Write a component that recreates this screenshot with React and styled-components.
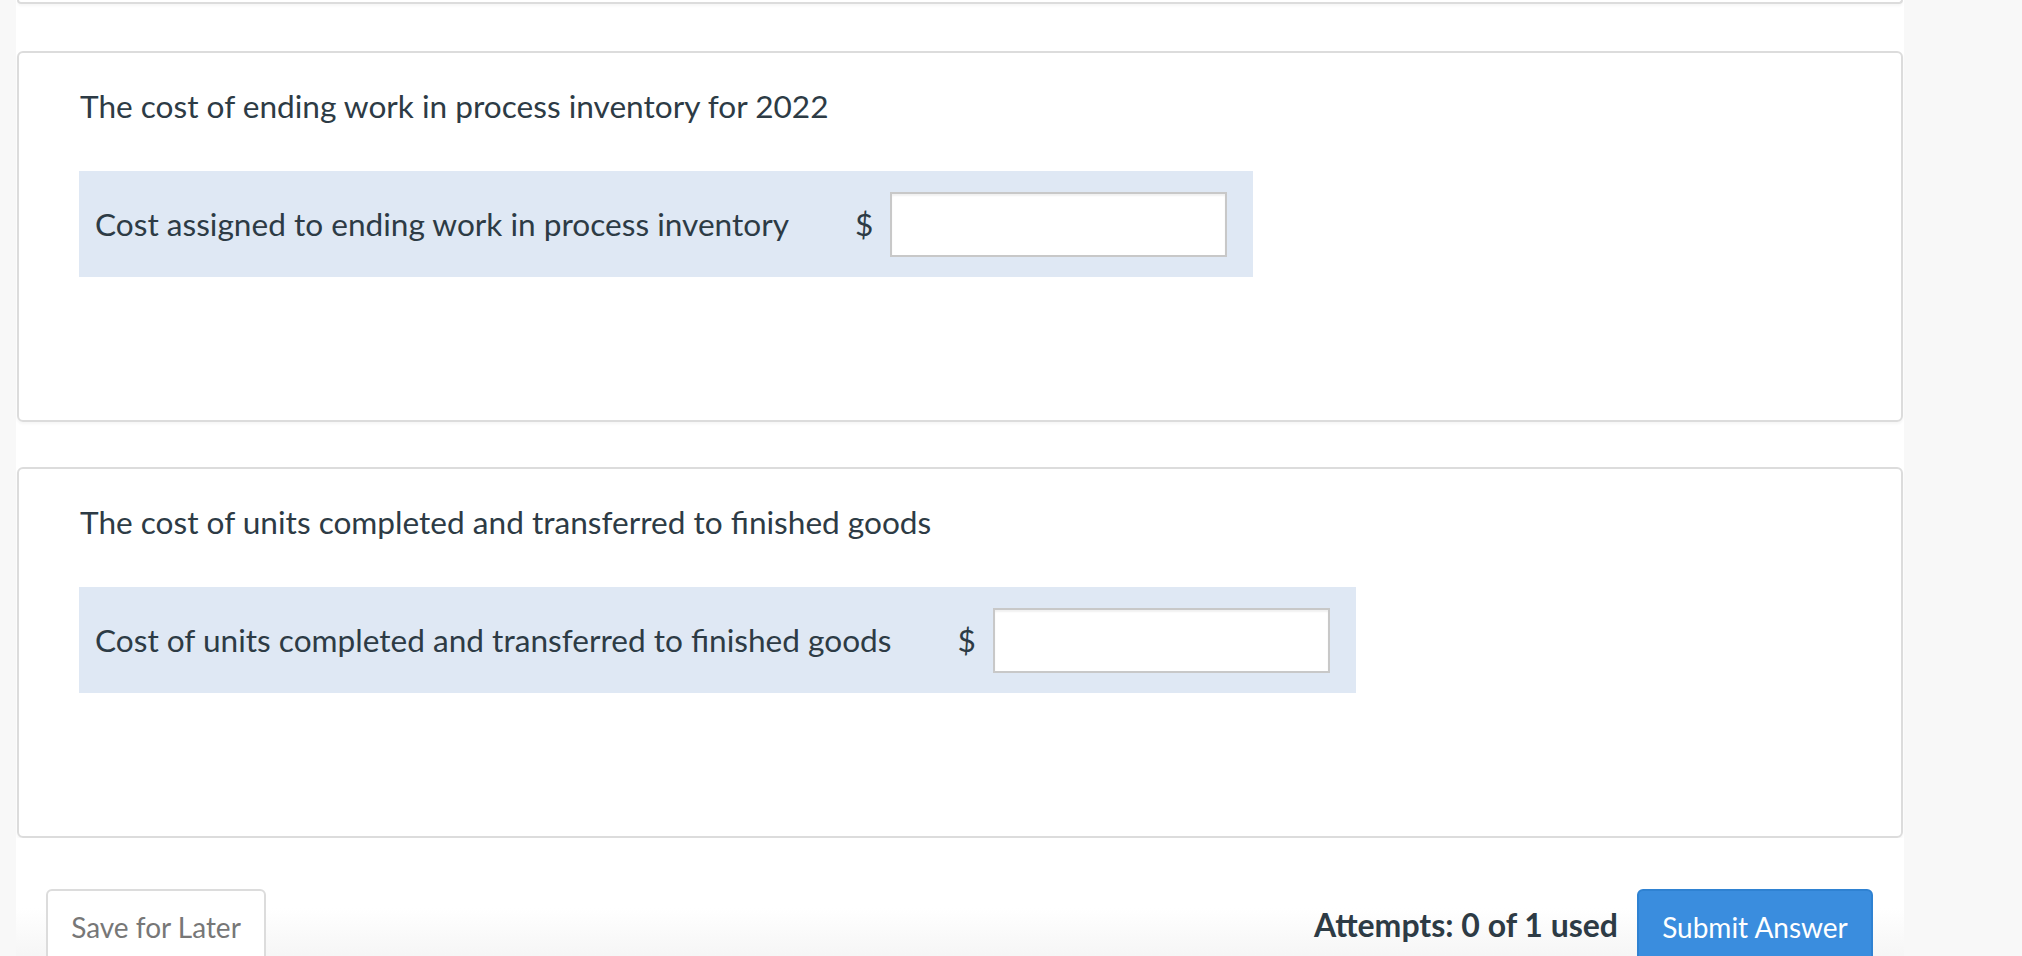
import React from 'react'
import styled, { createGlobalStyle } from 'styled-components'

const GlobalStyle = createGlobalStyle`
  body {
    margin: 0;
    background: #f8f8f8;
    font-family: Lato, "Open Sans", sans-serif;
    color: #2d3b45;
  }
`

const questions = [
  {
    title: 'The cost of ending work in process inventory for 2022',
    label: 'Cost assigned to ending work in process inventory',
  },
  {
    title: 'The cost of units completed and transferred to finished goods',
    label: 'Cost of units completed and transferred to finished goods',
  },
]

const App = () => {
  return (
    <>
      <GlobalStyle />
      <Page>
        <PrevCard />
        {questions.map((q) => (
          <Card key={q.title}>
            <Title>{q.title}</Title>
            <AnswerRow>
              <Label>{q.label}</Label>
              <Dollar>$</Dollar>
              <AmountInput type="text" aria-label={q.label} />
            </AnswerRow>
          </Card>
        ))}
        <Footer>
          <SaveButton>Save for Later</SaveButton>
          <Actions>
            <Attempts>Attempts: 0 of 1 used</Attempts>
            <SubmitButton>Submit Answer</SubmitButton>
          </Actions>
        </Footer>
      </Page>
    </>
  )
}

const Page = styled.div`
  margin-left: 16px;
  width: 1888px;
  height: 956px;
  overflow: hidden;
  background: #fff;
  display: flex;
  flex-direction: column;
`

const PrevCard = styled.div`
  flex-shrink: 0;
  height: 2px;
  margin: 0 1px;
  border: 2px solid #dcdcdc;
  border-top: none;
  border-radius: 0 0 6px 6px;
  box-shadow: 0 2px 3px rgba(0, 0, 0, 0.04);
`

const Card = styled.div`
  flex-shrink: 0;
  margin: 47px 1px 0;
  height: 371px;
  box-sizing: border-box;
  padding: 31px 60px 0;
  border: 2px solid #dcdcdc;
  border-radius: 6px;
  box-shadow: 0 2px 3px rgba(0, 0, 0, 0.04);
  display: flex;
  flex-direction: column;
  align-items: flex-start;

  & + & {
    margin-top: 45px;
  }
`

const Title = styled.p`
  margin: 0;
  font-size: 31.6px;
  line-height: 44px;
  padding-left: 1px;
`

const AnswerRow = styled.div`
  margin-top: 43px;
  display: flex;
  align-items: center;
  height: 106px;
  box-sizing: border-box;
  padding: 0 26px 0 16px;
  background: #dfe8f4;
`

const Label = styled.span`
  font-size: 31.6px;
  margin-right: 66px;
`

const Dollar = styled.span`
  font-size: 31.6px;
  margin-right: 17px;
`

const AmountInput = styled.input`
  width: 337px;
  height: 65px;
  box-sizing: border-box;
  border: 2px solid #c8c8c8;
  background: #fff;
  box-shadow: inset 0 2px 2px rgba(0, 0, 0, 0.06);
  font-family: inherit;
  font-size: 26px;
  padding: 0 10px;
  outline: none;
`

const Footer = styled.div`
  flex: 1;
  display: flex;
  justify-content: space-between;
  align-items: flex-start;
  padding: 51px 31px 0 30px;
  background: linear-gradient(#fff 55%, #f4f4f4);
`

const Actions = styled.div`
  display: flex;
  align-items: center;
  gap: 19px;
`

const Button = styled.button`
  flex-shrink: 0;
  height: 76px;
  border-radius: 6px;
  font-family: Lato, sans-serif;
  font-size: 28px;
  padding: 0;
  cursor: pointer;
`

const SaveButton = styled(Button)`
  width: 220px;
  background: #fff;
  color: #777;
  border: 2px solid #dcdcdc;
`

const SubmitButton = styled(Button)`
  width: 236px;
  background: #3a8dde;
  color: #fff;
  border: 2px solid #2f82d2;
`

const Attempts = styled.span`
  font-size: 32px;
  font-weight: 700;
  margin-top: -6px;
`

export default App
